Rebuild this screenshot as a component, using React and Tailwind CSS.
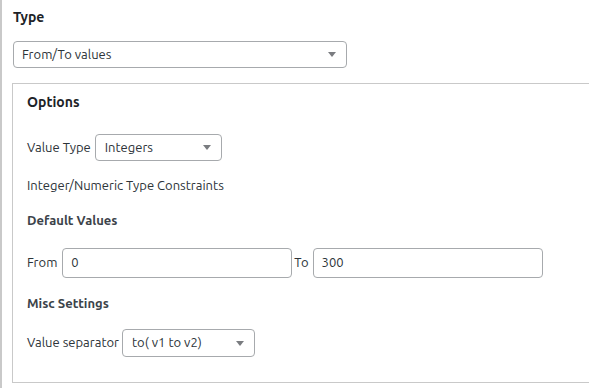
import React from 'react';

const Caret = () => (
  <svg width="8" height="5" viewBox="0 0 8 5" className="shrink-0">
    <path d="M0 0h8L4 5z" fill="#7a7c80" />
  </svg>
);

const Select = ({ value, className }) => (
  <div className={`flex items-center justify-between rounded-[4px] border border-[#a7aaad] bg-white pl-[8px] pr-[10px] ${className}`}>
    <span>{value}</span>
    <Caret />
  </div>
);

const Input = ({ value }) => (
  <div className="flex h-[30px] w-[230px] items-center rounded-[4px] border border-[#a7aaad] bg-white px-[8px]">
    {value}
  </div>
);

const App = () => {
  return (
    <div className="h-[388px] w-[589px] overflow-hidden bg-white text-[13px] text-[#2c3338] border-l-2 border-[#c9c9c9] font-['Ubuntu','Noto_Sans',sans-serif]">
      <div className="pl-[11px] pt-[8px]">
        <h2 className="text-[14px] font-bold leading-[18px] text-[#1d2327]">Type</h2>
        <Select value="From/To values" className="mt-[15px] h-[27px] w-[334px]" />
      </div>

      {/* Options box */}
      <div className="ml-[10px] mt-[15px] h-[300px] w-[600px] border border-[#c9c9c9] pl-[14px] pt-[9px]">
        <h3 className="text-[14px] font-bold leading-[18px] text-[#1d2327]">Options</h3>

        <div className="mt-[23px] flex items-center gap-[4px]">
          <span>Value Type</span>
          <Select value="Integers" className="h-[27px] w-[127px] pl-[9px]" />
        </div>

        <p className="mt-[15px] leading-[18px]">Integer/Numeric Type Constraints</p>

        <h4 className="mt-[17px] font-bold leading-[18px] text-[#3c434a]">Default Values</h4>

        <div className="mt-[19px] flex items-center">
          <span>From</span>
          <div className="ml-[5px]">
            <Input value="0" />
          </div>
          <span className="ml-[2px] mr-[4px]">To</span>
          <Input value="300" />
        </div>

        <h4 className="mt-[16px] font-bold leading-[18px] text-[#3c434a]">Misc Settings</h4>

        <div className="mt-[17px] flex items-center gap-[3px]">
          <span>Value separator</span>
          <Select value="to( v1 to v2)" className="h-[28px] w-[133px] pl-[9px]" />
        </div>
      </div>
    </div>
  );
};

export default App;
